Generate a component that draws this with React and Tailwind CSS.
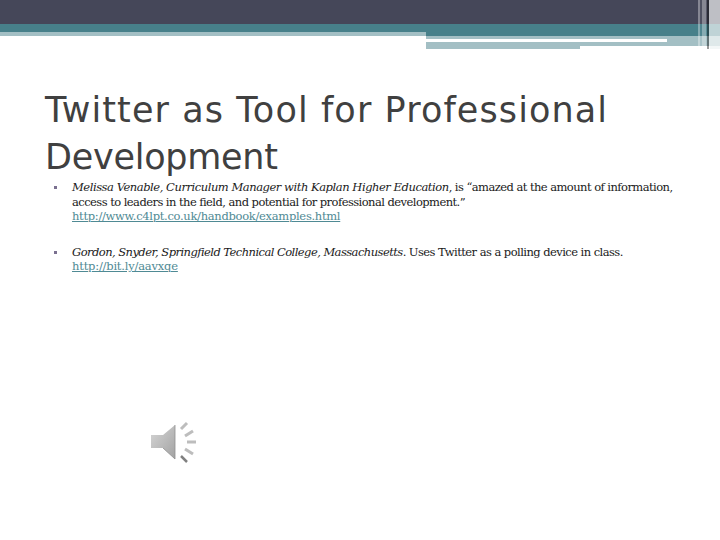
const Stripes = () => (
  <div className="absolute top-0 right-0 flex h-[49px] w-[22px]">
    <div className="w-[2px] h-[46px] bg-white/35" />
    <div className="w-[2px] h-[46px] bg-white/5" />
    <div className="w-[4px] h-[46px] bg-white/35" />
    <div className="w-[1px] h-[46px] bg-white/10" />
    <div className="w-[2px] h-[49px] bg-black/40" />
    <div className="flex-1 h-[49px] bg-white/65" />
  </div>
);

const Speaker = () => (
  <svg width="46" height="46" viewBox="0 0 46 46" className="ml-[150px]">
    <defs>
      <linearGradient id="spk" x1="0" y1="0" x2="1" y2="1">
        <stop offset="0" stopColor="#d6d6d6" />
        <stop offset="1" stopColor="#a2a2a2" />
      </linearGradient>
    </defs>
    <path d="M1 14 H13 L25 4 V38 L13 27 H1 Z" fill="url(#spk)" />
    <path d="M13 27 L25 38 V4" fill="none" stroke="#8f8f8f" strokeWidth="0.8" />
    <g stroke="#bdbdbd" strokeWidth="3">
      <path d="M31 8 L37 2" />
      <path d="M35 15 L43 10" />
      <path d="M37 21 L46 21" />
      <path d="M35 28 L43 33" />
    </g>
    <path d="M31 35 L37 41" stroke="#808080" strokeWidth="2.5" />
  </svg>
);

export default function App() {
  return (
    <div className="relative w-[720px] h-[540px] bg-white overflow-hidden">
      <header>
        <div className="h-6 bg-[#454759]" />
        <div className="h-2 bg-[#47808a]" />
        <div className="flex h-1">
          <div className="w-[426px] bg-[#a3bfc4]" />
          <div className="flex-1 bg-[#47808a]" />
        </div>
        <div className="ml-[426px]">
          <div className="h-[3px] bg-[#a3bfc4]" />
          <div className="flex h-[3px]">
            <div className="w-[241px] bg-white" />
            <div className="flex-1 bg-[#a3bfc4]" />
          </div>
          <div className="h-1 bg-[#a3bfc4]" />
          <div className="flex h-[3px] justify-between">
            <div className="w-[154px] bg-[#a3bfc4]" />
            <div className="w-[10px] bg-[#dce8e9]" />
          </div>
        </div>
      </header>
      <Stripes />

      <h1 className="ml-[45px] mt-[38px] text-[35px] leading-[47px] text-[#404040] tracking-[1.1px] font-['DejaVu_Sans',sans-serif]">
        Twitter as Tool for Professional<br />
        <span className="tracking-[-0.26px]">Development</span>
      </h1>

      <ul className="-mt-[1px] ml-[54px] w-[640px] text-[11.5px] leading-[14.5px] text-[#1a1a1a] font-['DejaVu_Serif',serif] tracking-[-0.55px]">
        <li className="flex">
          <span className="w-[3px] h-[3px] mt-[6px] mr-[15px] shrink-0 bg-[#7a7090]" />
          <p>
            <em className="tracking-[-0.45px]">Melissa Venable, Curriculum Manager with Kaplan Higher Education</em>, is “amazed at the amount of information, access to leaders in the field, and potential for professional development.”<br />
            <a className="underline text-[#4f8a94] tracking-[-0.3px]">http://www.c4lpt.co.uk/handbook/examples.html</a>
          </p>
        </li>
        <li className="flex mt-[21px]">
          <span className="w-[3px] h-[3px] mt-[6px] mr-[15px] shrink-0 bg-[#7a7090]" />
          <p>
            <em>Gordon, Snyder, Springfield Technical College, Massachusetts</em>. Uses Twitter as a polling device in class.<br />
            <a className="underline text-[#4f8a94] tracking-[-0.2px]">http://bit.ly/aavxqe</a>
          </p>
        </li>
      </ul>

      <div className="mt-[147px]">
        <Speaker />
      </div>
    </div>
  );
}
